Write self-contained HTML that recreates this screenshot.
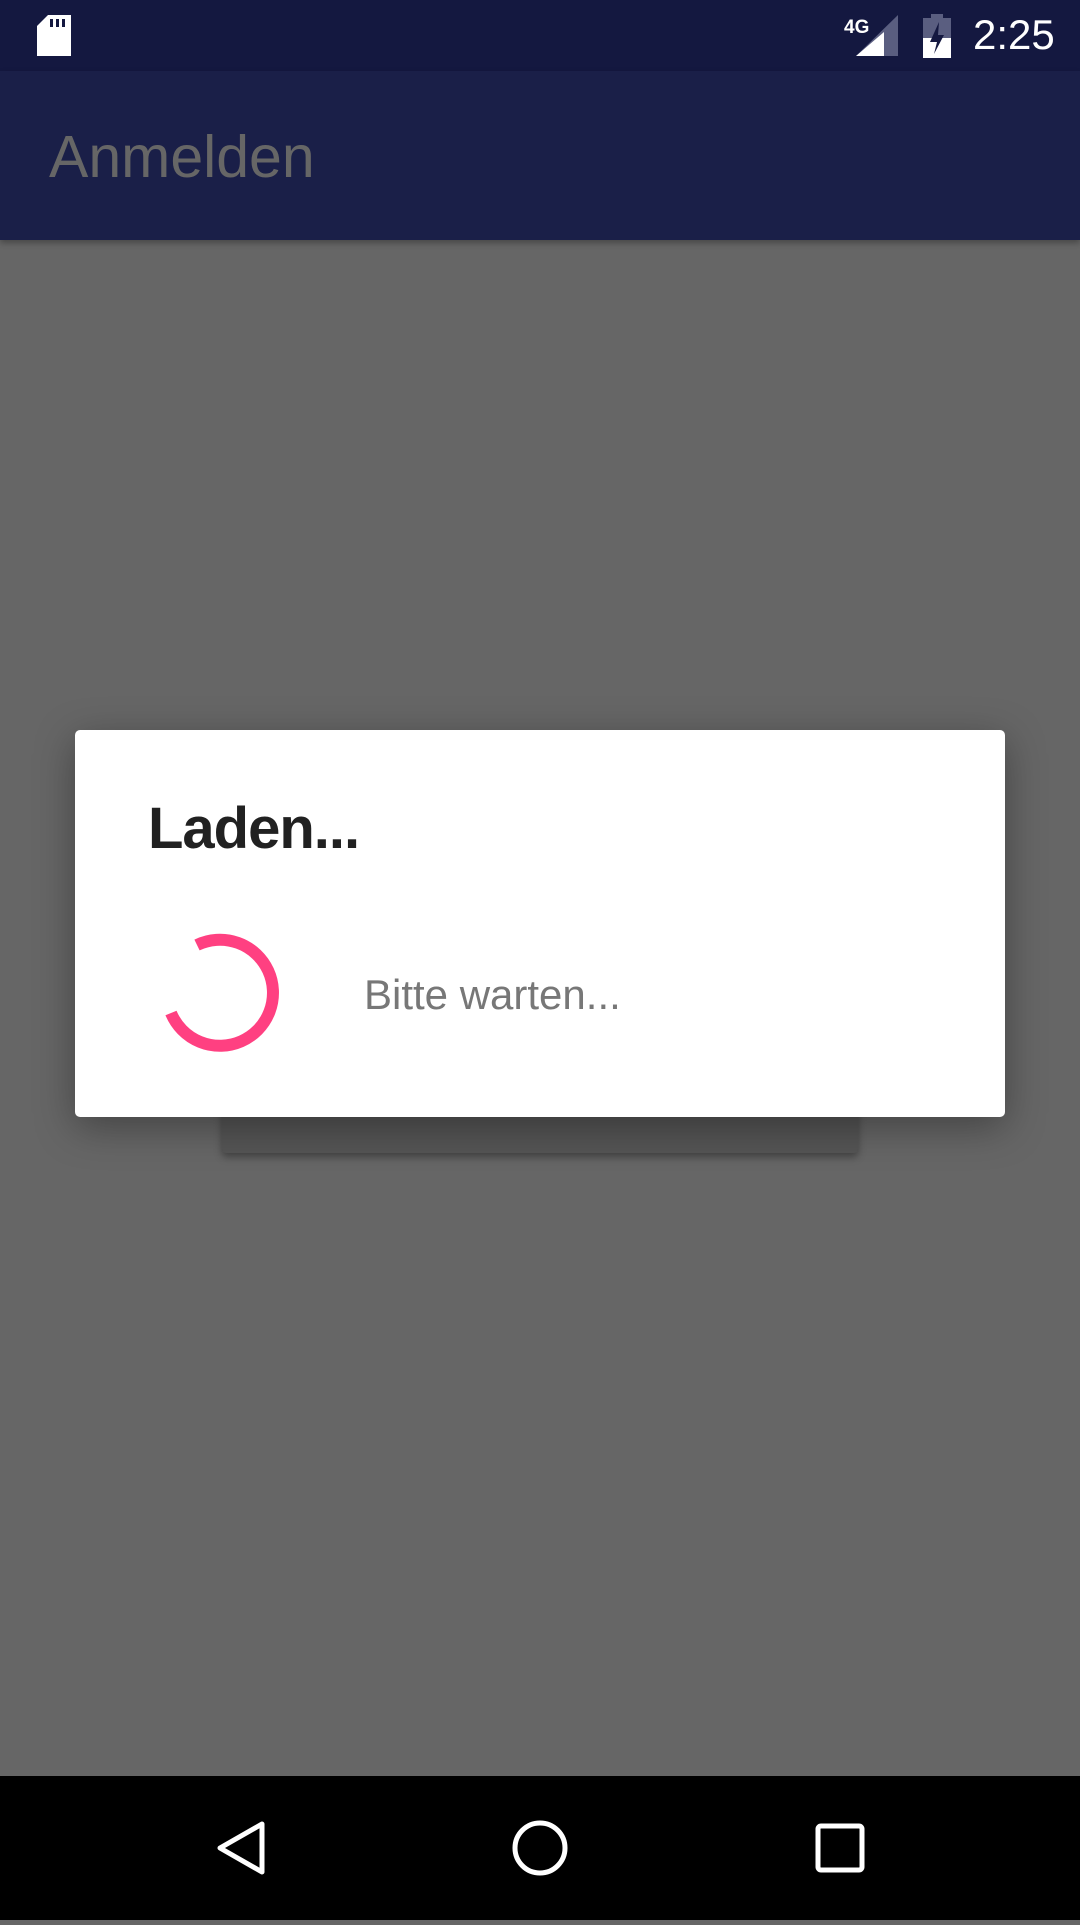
<!DOCTYPE html>
<html><head><meta charset="utf-8"><style>
html,body{margin:0;padding:0}
body{width:1080px;height:1920px;position:relative;overflow:hidden;background:#666;font-family:"Liberation Sans",sans-serif}
.sb{position:absolute;left:0;top:0;width:1080px;height:71px;background:#141840}
.ab{position:absolute;left:0;top:71px;width:1080px;height:169px;background:#1a1f48;box-shadow:0 3px 6px rgba(0,0,0,.3)}
.ab span{position:absolute;left:49px;top:57px;font-size:59px;color:#666;line-height:1}
.card{position:absolute;left:222px;top:1080px;width:636px;height:73px;background:#555;border-radius:4px;box-shadow:0 4px 8px rgba(0,0,0,.35)}
.dlg{position:absolute;left:75px;top:730px;width:930px;height:387px;background:#fff;border-radius:5px;box-shadow:0 10px 40px rgba(0,0,0,.35)}
.t{position:absolute;left:73px;top:70px;font-size:58px;font-weight:bold;color:#212121;line-height:1;letter-spacing:-1px}
.m{position:absolute;left:289px;top:244px;font-size:42px;color:#777;line-height:1}
.nav{position:absolute;left:0;top:1776px;width:1080px;height:144px;background:#000}
.time{position:absolute;left:973px;top:14px;color:#fff;font-size:42px;line-height:1}
</style></head><body>
<div class="sb">
<svg width="1080" height="71" style="position:absolute;left:0;top:0">
<path d="M48 15 H71 V56 H37 V26 Z" fill="#fff"/>
<rect x="50" y="19" width="3" height="8" fill="#141840"/><rect x="56" y="19" width="3" height="8" fill="#141840"/><rect x="62" y="19" width="3" height="8" fill="#141840"/>
<text x="844" y="33" font-family="Liberation Sans" font-size="19" font-weight="bold" fill="#fff">4G</text>
<path d="M898 15 V56 H856 Z" fill="#5a5e80"/>
<path d="M884 32 V56 H856 Z" fill="#fff"/>
<rect x="923" y="18" width="28" height="40" fill="#5a5e80"/><rect x="931" y="14" width="12" height="5" fill="#5a5e80"/>
<rect x="923" y="38" width="28" height="20" fill="#fff"/>
<path d="M939 22 L930 42 H937 L934 54 L944 35 H938 Z" fill="#141840"/>
</svg>
<div class="time">2:25</div>
</div>
<div class="ab"><span>Anmelden</span></div>
<div class="card"></div>
<div class="dlg">
<div class="t">Laden...</div>
<svg width="200" height="200" style="position:absolute;left:45px;top:163px">
<path d="M77 52 A53 53 0 1 1 51 120" fill="none" stroke="#ff4081" stroke-width="12"/>
</svg>
<div class="m">Bitte warten...</div>
</div>
<div class="nav">
<svg width="1080" height="144">
<path d="M262 48 V96 L220 72 Z" fill="none" stroke="#fff" stroke-width="5" stroke-linejoin="round"/>
<circle cx="540" cy="72" r="25" fill="none" stroke="#fff" stroke-width="5"/>
<rect x="818" y="50" width="44" height="44" rx="3" fill="none" stroke="#fff" stroke-width="5"/>
</svg>
</div>
</body></html>
